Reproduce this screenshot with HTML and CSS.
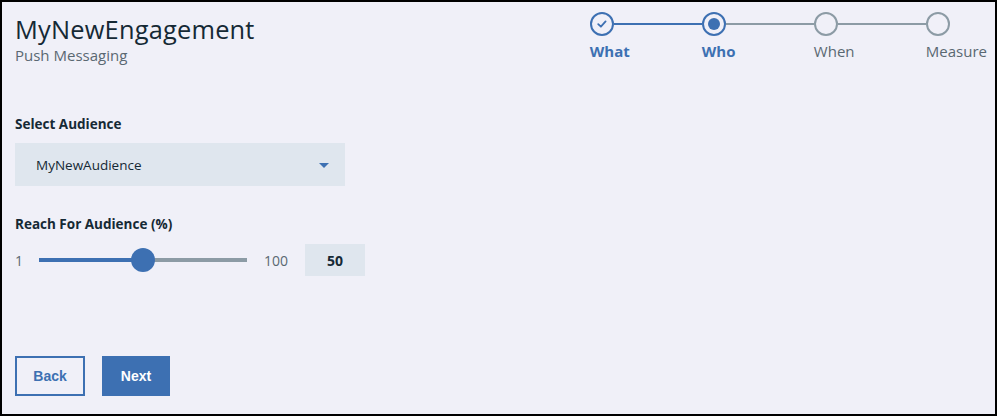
FILE: index.html
```html
<!DOCTYPE html>
<html>
<head>
<meta charset="utf-8">
<link rel="stylesheet" href="styles.css">
</head>
<body>
<div class="frame">
  <header class="header">
    <div class="titles">
      <h1 class="title">MyNewEngagement</h1>
      <div class="subtitle">Push Messaging</div>
    </div>
    <ol class="stepper">
      <li class="step done">
        <div class="track">
          <span class="dot">
            <svg width="12" height="12" viewBox="0 0 12 12"><path d="M2.2 6.2 L4.9 8.7 L9.6 3.4" fill="none" stroke="#3d70b2" stroke-width="1.8" stroke-linecap="round" stroke-linejoin="round"/></svg>
          </span>
          <span class="line blue"></span>
        </div>
        <span class="label active">What</span>
      </li>
      <li class="step current">
        <div class="track">
          <span class="dot"><span class="inner"></span></span>
          <span class="line"></span>
        </div>
        <span class="label active">Who</span>
      </li>
      <li class="step">
        <div class="track">
          <span class="dot"></span>
          <span class="line"></span>
        </div>
        <span class="label">When</span>
      </li>
      <li class="step last">
        <div class="track">
          <span class="dot"></span>
        </div>
        <span class="label">Measure</span>
      </li>
    </ol>
  </header>

  <section class="field">
    <div class="field-label">Select Audience</div>
    <div class="select">
      <span>MyNewAudience</span>
      <svg class="caret" width="10" height="5" viewBox="0 0 10 5"><path d="M0 0 H10 L5 5 Z" fill="#3d70b2"/></svg>
    </div>
  </section>

  <section class="field reach">
    <div class="field-label">Reach For Audience (%)</div>
    <div class="slider-row">
      <span class="range-num">1</span>
      <div class="slider">
        <div class="fill" style="width: 50%"></div>
        <div class="thumb" style="left: 50%"></div>
      </div>
      <span class="range-num max">100</span>
      <div class="value-box">50</div>
    </div>
  </section>

  <div class="actions">
    <button class="btn secondary">Back</button>
    <button class="btn primary">Next</button>
  </div>
</div>
</body>
</html>
```

FILE: styles.css
```css
* { box-sizing: border-box; }
html, body { margin: 0; padding: 0; }
body {
  font-family: "Open Sans", "Noto Sans", sans-serif;
  color: #152935;
}
.frame {
  width: 997px;
  height: 416px;
  border: 2px solid #000;
  background: #f0f0f8;
  padding: 11px 0 0 13px;
  display: flex;
  flex-direction: column;
}
.header {
  display: flex;
  justify-content: space-between;
  align-items: flex-start;
}
.title {
  margin: 0;
  font-size: 25.4px;
  font-weight: 400;
  line-height: 32px;
  letter-spacing: 0.2px;
  color: #152935;
}
.subtitle {
  font-size: 15px;
  line-height: 20px;
  color: #5a6872;
  margin-top: 0;
}
.stepper {
  list-style: none;
  margin: 0;
  padding: 0;
  display: flex;
  margin-right: 8px;
  margin-top: -1px;
}
.step {
  width: 112px;
  display: flex;
  flex-direction: column;
}
.step.last { width: auto; }
.track {
  display: flex;
  align-items: center;
  height: 24px;
}
.dot {
  width: 24px;
  height: 24px;
  border-radius: 50%;
  border: 2px solid #8c9ba5;
  flex: none;
  display: flex;
  align-items: center;
  justify-content: center;
}
.done .dot, .current .dot { border-color: #3d70b2; }
.inner {
  width: 12px;
  height: 12px;
  border-radius: 50%;
  background: #3d70b2;
}
.line {
  flex: 1;
  height: 2px;
  background: #8c9ba5;
}
.line.blue { background: #3d70b2; }
.label {
  font-size: 15px;
  line-height: 20px;
  margin-top: 5px;
  color: #5a6872;
}
.label.active {
  color: #3d70b2;
  font-weight: 700;
}
.field { margin-top: 50px; }
.field-label {
  font-size: 13.5px;
  font-weight: 700;
  line-height: 18px;
  color: #152935;
}
.select {
  margin-top: 10px;
  width: 330px;
  height: 43px;
  background: #dfe6ee;
  display: flex;
  align-items: center;
  justify-content: space-between;
  padding: 0 16px 0 21px;
  font-size: 13.5px;
  color: #152935;
}
.caret { margin-top: 1px; }
.field.reach { margin-top: 29px; }
.slider-row {
  display: flex;
  align-items: center;
  margin-top: 11px;
  height: 32px;
}
.range-num {
  font-size: 14px;
  color: #5a6872;
  width: 24px;
}
.range-num.max { width: auto; margin-left: 17px; }
.slider {
  position: relative;
  width: 208px;
  height: 4px;
  background: #8c9ba5;
}
.fill {
  height: 4px;
  background: #3d70b2;
}
.thumb {
  position: absolute;
  top: 50%;
  width: 24px;
  height: 24px;
  margin: -12px 0 0 -12px;
  border-radius: 50%;
  background: #3d70b2;
}
.value-box {
  margin-left: 17px;
  width: 60px;
  height: 32px;
  background: #dfe6ee;
  display: flex;
  align-items: center;
  justify-content: center;
  font-size: 14px;
  font-weight: 700;
  color: #152935;
}
.actions {
  margin-top: auto;
  margin-bottom: 18px;
  display: flex;
  gap: 17px;
}
.btn {
  height: 40px;
  font-family: "Liberation Sans", Arial, sans-serif;
  font-size: 14px;
  font-weight: 700;
  border: 2px solid #3d70b2;
  padding: 0;
  cursor: pointer;
}
.btn.secondary {
  width: 70px;
  background: transparent;
  color: #3d70b2;
}
.btn.primary {
  width: 68px;
  background: #3d70b2;
  color: #fff;
}
```
